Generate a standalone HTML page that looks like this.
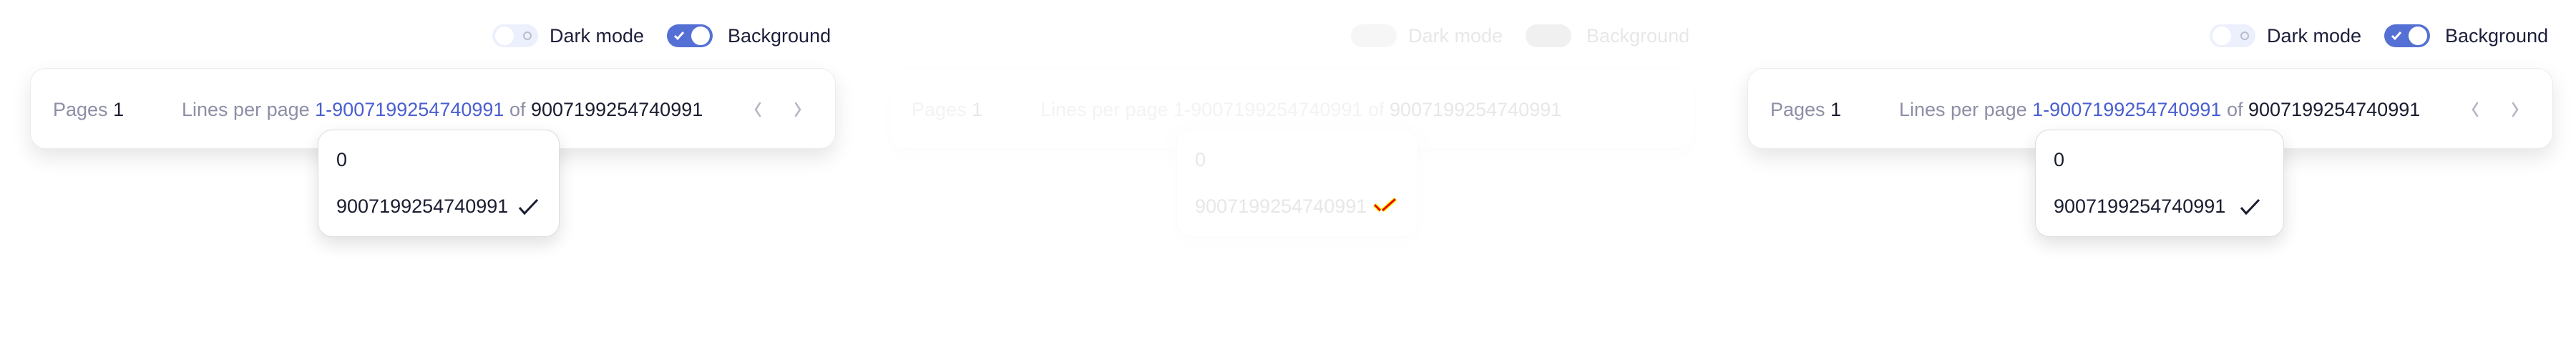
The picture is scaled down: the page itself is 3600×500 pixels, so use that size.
<!DOCTYPE html>
<html><head><meta charset="utf-8"><style>
*{margin:0;padding:0;box-sizing:border-box}
body{width:3600px;height:500px;background:#fff;font-family:"Liberation Sans",sans-serif;position:relative;overflow:hidden}
.p{position:absolute;top:0;width:1200px;height:500px}
.tg{position:absolute;top:34px;width:64px;height:32px;border-radius:16px}
.lbl{position:absolute;top:33px;font-size:27px;color:#1c1f3a;line-height:34px}
.card{position:absolute;left:42px;top:95px;width:1126px;height:113px;border-radius:22px;background:#fff;border:1px solid #ececf0;box-shadow:0 12px 28px rgba(0,0,0,.10)}
.t{position:absolute;top:136px;font-size:27px;line-height:34px;white-space:nowrap}
.g{color:#8d8fa6}.d{color:#1a1c30}.b{color:#4a5fd0}
.dd{position:absolute;left:444px;top:181px;width:338px;height:150px;border-radius:20px;background:#fff;border:1px solid #dcdce2;box-shadow:0 10px 24px rgba(0,0,0,.12)}
</style></head><body>
<div class="p" style="left:0">
 <div class="tg" style="left:688px;background:#eceffc"><div style="position:absolute;left:4px;top:3px;width:26px;height:26px;border-radius:13px;background:#fff"></div><div style="position:absolute;left:43px;top:10px;width:12px;height:12px;border-radius:6px;border:2px solid #b9bccb"></div></div>
 <div class="lbl" style="left:768px">Dark mode</div>
 <div class="tg" style="left:932px;background:#5570d4"><svg style="position:absolute;left:9px;top:9px" width="16" height="14" viewBox="0 0 16 14"><path d="M2 7l4 4 8-9" fill="none" stroke="#fff" stroke-width="3"/></svg><div style="position:absolute;left:34px;top:3px;width:26px;height:26px;border-radius:13px;background:#fff"></div></div>
 <div class="lbl" style="left:1017px">Background</div>
 <div class="card"></div>
 <div class="t" style="left:74px"><span class="g">Pages</span> <span class="d">1</span></div>
 <div class="t" style="left:254px"><span class="g">Lines per page</span> <span class="b">1-9007199254740991</span> <span class="g">of</span> <span class="d">9007199254740991</span></div>
 <svg style="position:absolute;left:1048px;top:140px" width="80" height="26" viewBox="0 0 80 26"><path d="M14 4l-6 9 6 9M64 4l6 9-6 9" fill="none" stroke="#b4b6c4" stroke-width="2.5" stroke-linecap="round"/></svg>
 <div class="dd"></div>
 <div class="t" style="left:470px;top:206px"><span class="d">0</span></div>
 <div class="t" style="left:470px;top:271px"><span class="d">9007199254740991</span></div>
 <svg style="position:absolute;left:724px;top:277px" width="30" height="24" viewBox="0 0 30 24"><path d="M2 13l7 8L27 2" fill="none" stroke="#1a1c30" stroke-width="3"/></svg>
</div>
<div class="p" style="left:1200px;opacity:.1">
 <div class="tg" style="left:688px;background:#aaa"></div>
 <div class="lbl" style="left:768px">Dark mode</div>
 <div class="tg" style="left:932px;background:#777"></div>
 <div class="lbl" style="left:1017px">Background</div>
 <div class="card"></div>
 <div class="t" style="left:74px"><span class="g">Pages</span> <span class="d">1</span></div>
 <div class="t" style="left:254px"><span class="g">Lines per page</span> <span class="g">1-9007199254740991</span> <span class="g">of</span> <span class="d">9007199254740991</span></div>
 <div class="dd"></div>
 <div class="t" style="left:470px;top:206px"><span class="d">0</span></div>
 <div class="t" style="left:470px;top:271px"><span class="d">9007199254740991</span></div>
</div>
<svg style="position:absolute;left:1918px;top:276px" width="36" height="24" viewBox="0 0 36 24"><path d="M3 10l8 8M14 18L32 2" fill="none" stroke="#ff0" stroke-width="6"/><path d="M3 10l8 8M14 18L32 2" fill="none" stroke="#e00" stroke-width="3"/></svg>
<div class="p" style="left:2400px">
 <div class="tg" style="left:688px;background:#eceffc"><div style="position:absolute;left:4px;top:3px;width:26px;height:26px;border-radius:13px;background:#fff"></div><div style="position:absolute;left:43px;top:10px;width:12px;height:12px;border-radius:6px;border:2px solid #b9bccb"></div></div>
 <div class="lbl" style="left:768px">Dark mode</div>
 <div class="tg" style="left:932px;background:#5570d4"><svg style="position:absolute;left:9px;top:9px" width="16" height="14" viewBox="0 0 16 14"><path d="M2 7l4 4 8-9" fill="none" stroke="#fff" stroke-width="3"/></svg><div style="position:absolute;left:34px;top:3px;width:26px;height:26px;border-radius:13px;background:#fff"></div></div>
 <div class="lbl" style="left:1017px">Background</div>
 <div class="card"></div>
 <div class="t" style="left:74px"><span class="g">Pages</span> <span class="d">1</span></div>
 <div class="t" style="left:254px"><span class="g">Lines per page</span> <span class="b">1-9007199254740991</span> <span class="g">of</span> <span class="d">9007199254740991</span></div>
 <svg style="position:absolute;left:1048px;top:140px" width="80" height="26" viewBox="0 0 80 26"><path d="M14 4l-6 9 6 9M64 4l6 9-6 9" fill="none" stroke="#b4b6c4" stroke-width="2.5" stroke-linecap="round"/></svg>
 <div class="dd" style="width:348px"></div>
 <div class="t" style="left:470px;top:206px"><span class="d">0</span></div>
 <div class="t" style="left:470px;top:271px"><span class="d">9007199254740991</span></div>
 <svg style="position:absolute;left:730px;top:277px" width="30" height="24" viewBox="0 0 30 24"><path d="M2 13l7 8L27 2" fill="none" stroke="#1a1c30" stroke-width="3"/></svg>
</div>
</body></html>
